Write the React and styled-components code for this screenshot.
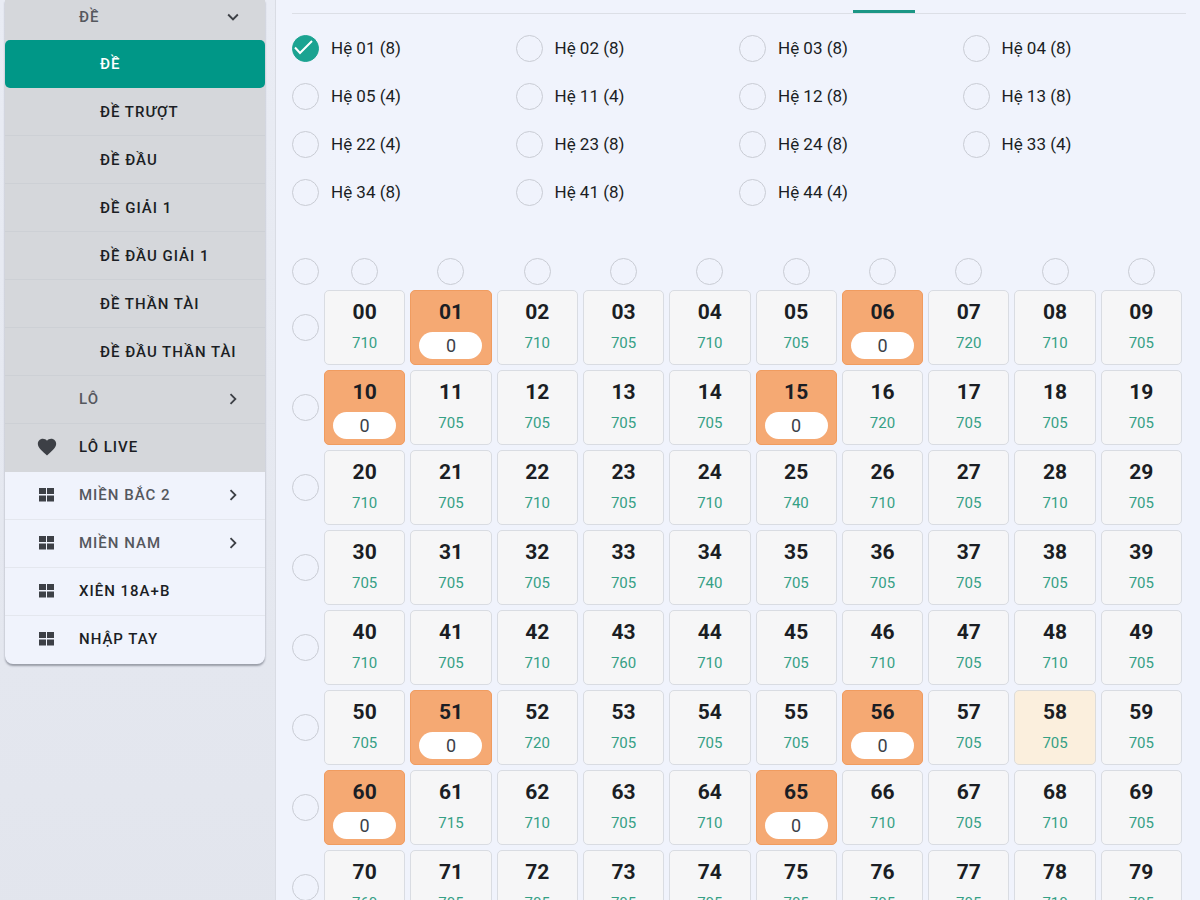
import React, { useState } from "react";
import styled, { createGlobalStyle, css } from "styled-components";
import { MdChevronRight, MdExpandMore, MdFavorite } from "react-icons/md";

const palette = {
  primary: "#009787",
  check: "#1ba391",
  price: "#35a085",
  text: "#1b1e24",
  muted: "#55585e",
  icon: "#3d4046",
  surface: "#f0f3fc",
  backdrop: "#e6e9f1",
  group: "#d5d7db",
  line: "#dcdfe6",
};

const GlobalStyles = createGlobalStyle`
  *, *::before, *::after {
    box-sizing: border-box;
  }
  body {
    margin: 0;
    height: 100vh;
    overflow: hidden;
    background-color: ${palette.backdrop};
    color: ${palette.text};
    font-family: Roboto, "Noto Sans", sans-serif;
  }
  button, input {
    font-family: inherit;
    color: inherit;
  }
`;

const Page = styled.div`
  display: grid;
  grid-template-columns: 275px minmax(0, 1fr);
  height: 100vh;
  overflow: hidden;
`;

const Sidebar = styled.nav`
  padding: 0 10px 0 5px;
  background: linear-gradient(#e9ecf4, #e2e5ed);
`;

const MenuCard = styled.div`
  border-radius: 0 0 8px 8px;
  background-color: ${palette.surface};
  box-shadow: 0 2px 2px rgba(40, 45, 60, 0.4);
  overflow: hidden;
`;

const MenuGroup = styled.div`
  background-color: ${({ $open }) => ($open ? palette.group : "transparent")};
`;

const MenuLink = styled.a`
  display: flex;
  align-items: center;
  height: 48px;
  padding: 0 21px 2px 28px;
  font-size: 15px;
  font-weight: 500;
  letter-spacing: 1px;
  color: ${({ $parent }) => ($parent ? palette.muted : palette.text)};
  text-decoration: none;
  border-bottom: 1px solid ${({ $open }) => ($open ? "#cdd0d5" : "#e4e7ee")};
  &:last-child {
    border-bottom-color: transparent;
  }
  ${({ $nested }) =>
    $nested &&
    css`
      padding-left: 95px;
      padding-bottom: 0;
    `}
  ${({ $head }) =>
    $head &&
    css`
      height: 40px;
      padding-bottom: 6px;
      border-bottom-color: transparent;
    `}
  ${({ $active }) =>
    $active &&
    css`
      color: #fff;
      background-color: ${palette.primary};
      border-color: transparent;
      border-radius: 5px;
    `}
`;

const MenuIcon = styled.span`
  display: flex;
  justify-content: center;
  width: 28px;
  margin-right: 18px;
  color: ${palette.icon};
`;

const MenuText = styled.span`
  flex-grow: 1;
`;

const Content = styled.main`
  padding: 0 14px 0 16px;
  background-color: ${palette.surface};
  border-left: 1px solid #d9dce4;
`;

const Tabs = styled.div`
  display: flex;
  align-items: flex-end;
  height: 14px;
  padding-left: 561px;
  overflow: hidden;
  border-bottom: 1px solid ${palette.line};
`;

const Tab = styled.button`
  flex-shrink: 0;
  width: 62px;
  height: 36px;
  padding: 0 0 12px;
  border: 0;
  border-bottom: 3px solid #1b9685;
  background: none;
  font-size: 16px;
  line-height: 18px;
`;

const SystemList = styled.div`
  display: grid;
  grid-template-columns: repeat(4, 1fr);
  grid-auto-rows: 48px;
  padding-top: 10px;
`;

const SystemLabel = styled.label`
  display: flex;
  align-items: center;
  gap: 12px;
  font-size: 17px;
`;

const CheckBox = styled.span`
  display: grid;
  width: 27px;
  height: 27px;
  > * {
    grid-area: 1 / 1;
  }
  svg {
    pointer-events: none;
  }
`;

const CheckInput = styled.input`
  appearance: none;
  width: 27px;
  height: 27px;
  margin: 0;
  border: 1px solid #c9ccd4;
  border-radius: 50%;
  &:checked {
    border-color: ${palette.check};
    background-color: ${palette.check};
  }
`;

const Board = styled.div`
  display: grid;
  grid-template-columns: 27px repeat(10, minmax(0, 1fr));
  grid-auto-rows: 75px;
  grid-template-rows: 28px;
  gap: 5px;
  align-items: center;
  justify-items: center;
  padding: 41px 4px 0 0;
`;

const cellLook = {
  plain: css`
    background-color: #f6f6f7;
    border-color: #d9dce2;
  `,
  hover: css`
    background-color: #fbefdd;
    border-color: #dddcda;
  `,
  selected: css`
    background-color: #f5a973;
    border-color: #f09c60;
  `,
};

const Cell = styled.div`
  display: flex;
  flex-direction: column;
  align-items: center;
  width: 100%;
  height: 75px;
  padding-top: 8px;
  border: 1px solid;
  border-radius: 5px;
  ${({ $look }) => cellLook[$look]}
`;

const CellNumber = styled.button`
  padding: 0;
  border: 0;
  background: none;
  font-size: 21px;
  font-weight: 700;
  line-height: 26px;
`;

const Price = styled.span`
  margin-top: 8px;
  font-size: 15px;
  line-height: 20px;
  color: ${palette.price};
`;

const StakeInput = styled.input`
  width: 63px;
  height: 27px;
  margin-top: 7px;
  padding: 0;
  border: 0;
  border-radius: 14px;
  background-color: #fff;
  color: #3c4148;
  font-size: 18px;
  text-align: center;
`;

const submenu = [
  "ĐỀ",
  "ĐỀ TRƯỢT",
  "ĐỀ ĐẦU",
  "ĐỀ GIẢI 1",
  "ĐỀ ĐẦU GIẢI 1",
  "ĐỀ THẦN TÀI",
  "ĐỀ ĐẦU THẦN TÀI",
];

const regions = [
  { title: "MIỀN BẮC 2", parent: true },
  { title: "MIỀN NAM", parent: true },
  { title: "XIÊN 18A+B" },
  { title: "NHẬP TAY" },
];

const systems = [
  "01 (8)", "02 (8)", "03 (8)", "04 (8)",
  "05 (4)", "11 (4)", "12 (8)", "13 (8)",
  "22 (4)", "23 (8)", "24 (8)", "33 (4)",
  "34 (8)", "41 (8)", "44 (4)",
];

const prices = [
  [710, 710, 710, 705, 710, 705, 710, 720, 710, 705],
  [705, 705, 705, 705, 705, 705, 720, 705, 705, 705],
  [710, 705, 710, 705, 710, 740, 710, 705, 710, 705],
  [705, 705, 705, 705, 740, 705, 705, 705, 705, 705],
  [710, 705, 710, 760, 710, 705, 710, 705, 710, 705],
  [705, 705, 720, 705, 705, 705, 705, 705, 705, 705],
  [710, 715, 710, 705, 710, 705, 710, 705, 710, 705],
  [760, 705, 705, 705, 705, 705, 705, 705, 710, 705],
];

const initialStakes = {
  "01": "0", "06": "0", "10": "0", "15": "0",
  "51": "0", "56": "0", "60": "0", "65": "0",
};

function GridIcon() {
  return (
    <svg width="16" height="14" viewBox="0 0 16 14" fill="currentColor">
      <rect width="7" height="6" x="0" y="0" />
      <rect width="7" height="6" x="8" y="0" />
      <rect width="7" height="6" x="0" y="7.5" />
      <rect width="7" height="6" x="8" y="7.5" />
    </svg>
  );
}

function RoundCheck({ defaultChecked = false, ...props }) {
  const [checked, setChecked] = useState(defaultChecked);
  return (
    <CheckBox>
      <CheckInput
        type="checkbox"
        checked={checked}
        onChange={() => setChecked(!checked)}
        {...props}
      />
      {checked && (
        <svg width="27" height="27" viewBox="0 0 27 27" fill="none">
          <path d="M3 12.5 8 18 20 6" stroke="#fff" strokeWidth="2" />
        </svg>
      )}
    </CheckBox>
  );
}

function MenuItem({ title, icon, arrow, ...props }) {
  return (
    <MenuLink href="#" {...props}>
      {!props.$nested && <MenuIcon>{icon}</MenuIcon>}
      <MenuText>{title}</MenuText>
      {arrow}
    </MenuLink>
  );
}

function BoardCell({ number, price, stake, onPick, onStake }) {
  const look =
    stake !== undefined ? "selected" : number === "58" ? "hover" : "plain";
  return (
    <Cell $look={look}>
      <CellNumber type="button" onClick={() => onPick(number)}>
        {number}
      </CellNumber>
      {stake === undefined ? (
        <Price>{price}</Price>
      ) : (
        <StakeInput
          aria-label={number}
          value={stake}
          onChange={(event) => onStake(number, event.target.value)}
        />
      )}
    </Cell>
  );
}

export default function App() {
  const [stakes, setStakes] = useState(initialStakes);

  function onPick(number) {
    setStakes(({ [number]: current, ...rest }) =>
      current === undefined ? { ...rest, [number]: "0" } : rest
    );
  }

  function onStake(number, value) {
    setStakes({ ...stakes, [number]: value });
  }

  const right = <MdChevronRight size={22} color={palette.icon} />;

  return (
    <>
      <GlobalStyles />
      <Page>
        <Sidebar>
          <MenuCard>
            <MenuGroup $open>
              <MenuItem
                title="ĐỀ"
                $parent
                $head
                arrow={<MdExpandMore size={22} color={palette.icon} />}
              />
              {submenu.map((title, index) => (
                <MenuItem
                  key={title}
                  title={title}
                  $nested
                  $open
                  $active={index === 0}
                />
              ))}
              <MenuItem title="LÔ" $parent $open arrow={right} />
              <MenuItem title="LÔ LIVE" $open icon={<MdFavorite size={22} />} />
            </MenuGroup>
            <MenuGroup>
              {regions.map(({ title, parent }) => (
                <MenuItem
                  key={title}
                  title={title}
                  $parent={parent}
                  icon={<GridIcon />}
                  arrow={parent && right}
                />
              ))}
            </MenuGroup>
          </MenuCard>
        </Sidebar>
        <Content>
          <Tabs>
            <Tab type="button">Hệ</Tab>
          </Tabs>
          <SystemList>
            {systems.map((system, index) => (
              <SystemLabel key={system}>
                <RoundCheck defaultChecked={index === 0} />
                Hệ {system}
              </SystemLabel>
            ))}
          </SystemList>
          <Board>
            {Array.from({ length: 11 }, (_, column) => (
              <RoundCheck key={column} aria-label={`Cột ${column}`} />
            ))}
            {prices.map((row, tens) => (
              <React.Fragment key={tens}>
                <RoundCheck aria-label={`Hàng ${tens}`} />
                {row.map((price, units) => {
                  const number = `${tens}${units}`;
                  return (
                    <BoardCell
                      key={number}
                      number={number}
                      price={price}
                      stake={stakes[number]}
                      onPick={onPick}
                      onStake={onStake}
                    />
                  );
                })}
              </React.Fragment>
            ))}
          </Board>
        </Content>
      </Page>
    </>
  );
}
